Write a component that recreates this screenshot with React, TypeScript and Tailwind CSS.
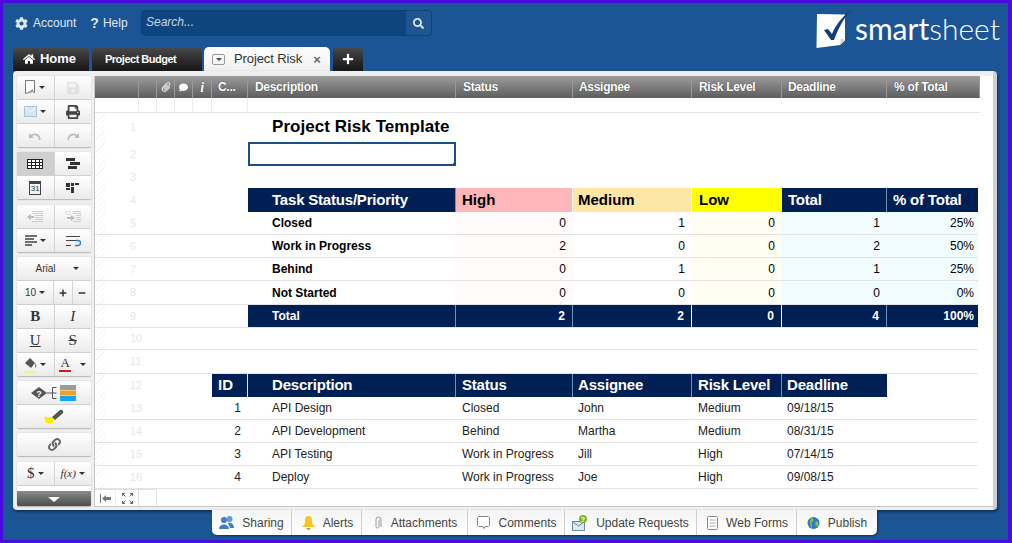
import React from 'react';
import { FaCog, FaHome, FaSearch, FaPrint, FaSave, FaPlus, FaMinus, FaLink, FaPaperclip, FaComment } from 'react-icons/fa';

const GRID = 'grid grid-cols-[117px_36px_208px_117px_119px_90px_105px_91px] w-[883px]';

type Cell = { t?: string; c?: string; box?: boolean };

const navy = 'bg-[#001f54] text-white font-bold';

const Row = ({ n, h = 23, line = true, cells }: { n: number; h?: number; line?: boolean; cells: Cell[] }) => (
  <div className={GRID + (line ? ' border-b border-[#e4e4e4]' : '')} style={{ height: h }}>
    <div className="flex items-center pl-[35px] text-[11px] text-[#e6e6e6] bg-[repeating-linear-gradient(135deg,#fff_0,#fff_3px,#f6f6f6_3px,#f6f6f6_4px)] bg-[length:10px_100%] bg-no-repeat">
      {n}
    </div>
    {cells.map((cell, i) => (
      <div key={i} className={'relative flex items-center whitespace-nowrap ' + (cell.c ?? '')}>
        {cell.t}
        {cell.box && <span className="absolute bottom-[-2px] right-[-2px] h-[3px] w-[3px] bg-[#1c4f86]" />}
      </div>
    ))}
  </div>
);

const blank = (k: number): Cell[] => Array.from({ length: k }, () => ({}));

const stat = (label: string, high: string, med: string, low: string, tot: string, pct: string): Cell[] => [
  {},
  { t: label, c: 'pl-[24px] text-[12px] font-bold text-black' },
  { t: high, c: 'justify-end pr-[7px] text-[12px] bg-[#fffbfb]' },
  { t: med, c: 'justify-end pr-[7px] text-[12px]' },
  { t: low, c: 'justify-end pr-[7px] text-[12px] bg-[#fffdf2]' },
  { t: tot, c: 'justify-end pr-[7px] text-[12px] bg-[#f0fcfd]' },
  { t: pct, c: 'justify-end pr-[4px] text-[12px] bg-[#f0fcfd]' },
];

const sep = ' border-r border-[#6f8fb8]';

const item = (id: string, d: string, s: string, a: string, r: string, dl: string): Cell[] => [
  { t: id, c: 'justify-end pr-[7px] text-[12px] text-[#222]' },
  { t: d, c: 'pl-[24px] text-[12px] text-[#222]' },
  { t: s, c: 'pl-[6px] text-[12px] text-[#222]' },
  { t: a, c: 'pl-[5px] text-[12px] text-[#222]' },
  { t: r, c: 'pl-[6px] text-[12px] text-[#222]' },
  { t: dl, c: 'pl-[5px] text-[12px] text-[#222]' },
  {},
];

const Tb = ({ children, w, on }: { children?: React.ReactNode; w?: string; on?: boolean }) => (
  <div
    className={
      'flex h-[23px] items-center justify-center gap-[3px] border-r border-[#d4d4d4] last:border-r-0 ' +
      (w ?? 'flex-1') +
      (on ? ' bg-[#cfcfcf]' : ' bg-gradient-to-b from-white to-[#ebebeb]')
    }
  >
    {children}
  </div>
);

const TbRow = ({ children }: { children: React.ReactNode }) => (
  <div className="flex border-b border-[#d0d0d0] last:border-b-0">{children}</div>
);

const Group = ({ children, c = '' }: { children: React.ReactNode; c?: string }) => (
  <div className={'w-[74px] overflow-hidden rounded-[2px] border-b border-[#bdbdbd] shadow-[0_0_1px_#999] ' + c}>
    {children}
  </div>
);

const Caret = () => <span className="h-0 w-0 border-x-[3px] border-t-[3px] border-x-transparent border-t-[#333]" />;

const ToolIcon = ({ children, w = 16, h = 16 }: { children: React.ReactNode; w?: number; h?: number }) => (
  <svg width={w} height={h} viewBox={`0 0 ${w} ${h}`}>
    {children}
  </svg>
);

const Toolbar = () => (
  <div className="flex h-[431px] w-[74px] flex-col gap-[4px] font-['Liberation_Sans',sans-serif]">
    <Group>
      <TbRow>
        <Tb>
          <ToolIcon w={11} h={15}>
            <path d="M.5.5h9v12l-2-1-7 2z" fill="#fff" stroke="#777" />
            <path d="M3 12l5-3v2z" fill="#999" />
          </ToolIcon>
          <Caret />
        </Tb>
        <Tb>
          <FaSave className="text-[14px] text-[#e2e2e2]" />
        </Tb>
      </TbRow>
      <TbRow>
        <Tb>
          <ToolIcon w={13} h={11}>
            <rect x=".5" y=".5" width="12" height="10" fill="#cfe8f3" stroke="#a9c4d2" />
            <path d="M1 1l5.500 5L12 1" fill="none" stroke="#fff" />
          </ToolIcon>
          <Caret />
        </Tb>
        <Tb>
          <FaPrint className="text-[14px] text-[#444]" />
        </Tb>
      </TbRow>
      <TbRow>
        <Tb>
          <ToolIcon w={14} h={10}>
            <path d="M12 9C11 3 6 2 3 5" fill="none" stroke="#bbb" strokeWidth="1.6" />
            <path d="M1 2v5h5z" fill="#bbb" />
          </ToolIcon>
        </Tb>
        <Tb>
          <ToolIcon w={14} h={10}>
            <path d="M2 9C3 3 8 2 11 5" fill="none" stroke="#bbb" strokeWidth="1.6" />
            <path d="M13 2v5H8z" fill="#bbb" />
          </ToolIcon>
        </Tb>
      </TbRow>
    </Group>
    <Group>
      <TbRow>
        <Tb on>
          <ToolIcon h={10}>
            <rect x=".5" y=".5" width="15" height="9" fill="#fff" stroke="#222" />
            <path d="M0 3.500h16M0 6.500h16M4.500 0v10M8.500 0v10M12.500 0v10" stroke="#222" />
          </ToolIcon>
        </Tb>
        <Tb>
          <ToolIcon h={11}>
            <path d="M1 0h9v3H1zM5 4h10v3H5zM3 8h9v3H3z" fill="#333" />
          </ToolIcon>
        </Tb>
      </TbRow>
      <TbRow>
        <Tb>
          <div className="flex h-[14px] w-[12px] items-end justify-center border border-t-[3px] border-[#444] text-[8px] leading-[10px] text-[#333]">
            31
          </div>
        </Tb>
        <Tb>
          <ToolIcon w={13} h={10}>
            <path d="M0 0h4v4H0zM5 0h3v3H5zM9 0h4v2H9zM0 5h4v2H0zM5 4h3v6H5z" fill="#333" />
          </ToolIcon>
        </Tb>
      </TbRow>
    </Group>
    <Group c="mt-px">
      <TbRow>
        <Tb>
          <ToolIcon h={12}>
            <path d="M5 .5h11M5 2.500h11M8 4.500h8M8 6.500h8M8 8.500h8M5 10.500h11" stroke="#ccc" />
            <path d="M0 6l4-3v2h3v2H4v2z" fill="#bbb" />
          </ToolIcon>
        </Tb>
        <Tb>
          <ToolIcon h={12}>
            <path d="M8 .5h8M8 2.500h8M11 4.500h5M11 6.500h5M11 8.500h5M8 10.500h8" stroke="#ccc" />
            <path d="M10 7L6 4v2H2v2h4v2z" fill="#bbb" />
            <path d="M1 .5h4v3H1z" fill="none" stroke="#ddd" />
          </ToolIcon>
        </Tb>
      </TbRow>
      <TbRow>
        <Tb>
          <ToolIcon w={12} h={11}>
            <path d="M0 1h12M0 4h9M0 7h12M0 10h7" stroke="#444" strokeWidth="1.4" />
          </ToolIcon>
          <Caret />
        </Tb>
        <Tb>
          <ToolIcon h={12}>
            <path d="M1 1.500h14M1 5.500h10M1 10.500h5" stroke="#444" />
            <path d="M11 5.500h2a2 2 0 0 1 0 5h-3" fill="none" stroke="#2a7fd0" strokeWidth="1.4" />
          </ToolIcon>
        </Tb>
      </TbRow>
    </Group>
    <Group>
      <TbRow>
        <Tb>
          <span className="pl-[6px] pr-[14px] text-[10px] text-[#333]">Arial</span>
          <Caret />
        </Tb>
      </TbRow>
      <TbRow>
        <Tb w="w-[37px]">
          <span className="text-[10px] text-[#333]">10</span>
          <Caret />
        </Tb>
        <Tb>
          <FaPlus className="text-[8px] text-[#333]" />
        </Tb>
        <Tb>
          <FaMinus className="text-[8px] text-[#333]" />
        </Tb>
      </TbRow>
      <TbRow>
        <Tb>
          <span className="font-['Liberation_Serif',serif] text-[15px] font-bold text-[#333]">B</span>
        </Tb>
        <Tb>
          <span className="font-['Liberation_Serif',serif] text-[15px] italic text-[#333]">I</span>
        </Tb>
      </TbRow>
      <TbRow>
        <Tb>
          <span className="font-['Liberation_Serif',serif] text-[15px] text-[#333] underline">U</span>
        </Tb>
        <Tb>
          <span className="font-['Liberation_Serif',serif] text-[15px] text-[#333] line-through">S</span>
        </Tb>
      </TbRow>
      <TbRow>
        <Tb>
          <ToolIcon w={13} h={16}>
            <path d="M1 6l5-5 5 5-4 5z" fill="#555" />
            <path d="M11 6c2 2 2 4 0 5z" fill="#888" />
            <path d="M0 15h11" stroke="#f4f060" strokeWidth="1.4" />
          </ToolIcon>
          <Caret />
        </Tb>
        <Tb>
          <div className="flex flex-col items-center pr-[6px]">
            <span className="font-['Liberation_Serif',serif] text-[13px] leading-[12px] text-[#333]">A</span>
            <span className="mt-px h-[2px] w-[12px] bg-[#d01c1c]" />
          </div>
          <Caret />
        </Tb>
      </TbRow>
    </Group>
    <Group>
      <TbRow>
        <Tb>
          <svg width="46" height="16" viewBox="0 0 46 16">
            <path d="M0 8l8-6 8 6-8 6z" fill="#555" />
            <text x="8" y="11.500" textAnchor="middle" fontSize="9" fontWeight="bold" fill="#fff" fontFamily="Liberation Sans">?</text>
            <path d="M16 8h5M21.500 2.500v11M21.500 2.500h4M21.500 8h4M21.500 13.500h4" stroke="#555" fill="none" />
            <rect x="29" y="0" width="16" height="5" fill="#9c9c9c" />
            <rect x="29" y="5.500" width="16" height="5" fill="#f2a01e" />
            <rect x="29" y="11" width="16" height="5" fill="#12a5f0" />
          </svg>
        </Tb>
      </TbRow>
      <TbRow>
        <Tb>
          <ToolIcon w={20} h={15}>
            <path d="M0 8h9v6H2z" fill="#f7ef00" />
            <path d="M8 8l8-7q2-1 3 1t-1 3l-7 6z" fill="#555" />
          </ToolIcon>
        </Tb>
      </TbRow>
    </Group>
    <Group>
      <TbRow>
        <Tb>
          <FaLink className="text-[13px] text-[#666]" />
        </Tb>
      </TbRow>
    </Group>
    <Group c="mt-px flex-1">
      <TbRow>
        <Tb>
          <span className="font-['Liberation_Serif',serif] text-[15px] text-[#333]">$</span>
          <Caret />
        </Tb>
        <Tb>
          <span className="font-['Liberation_Serif',serif] text-[11px] italic text-[#333]">f(x)</span>
          <Caret />
        </Tb>
      </TbRow>
      <div className="h-[5px] bg-white" />
      <div className="flex h-[16px] items-center justify-center bg-gradient-to-b from-[#8a8a8a] to-[#4a4a4a]">
        <span className="h-0 w-0 border-x-[6px] border-t-[5px] border-x-transparent border-t-white" />
      </div>
    </Group>
  </div>
);

const Head = ({ children, c = '' }: { children?: React.ReactNode; c?: string }) => (
  <div className={'flex items-center overflow-hidden whitespace-nowrap border-r border-[#999] text-[12px] font-bold tracking-[-0.3px] text-white [text-shadow:0_0_1px_#333] ' + c}>
    {children}
  </div>
);

const Sheet = () => (
  <div className="flex min-w-0 flex-1 flex-col overflow-hidden border-b border-l border-[#c8c8c8] bg-white font-['Liberation_Sans',sans-serif]">
    <div className="flex-1 overflow-hidden">
      <div className="flex h-[22px] w-[885px] bg-gradient-to-b from-[#9c9c9c] to-[#5e5e5e]">
        <Head c="w-[44px]" />
        <Head c="w-[18px]" />
        <Head c="w-[18px] justify-center">
          <FaPaperclip className="text-[10px] text-[#ddd]" />
        </Head>
        <Head c="w-[18px] justify-center">
          <FaComment className="text-[9px] text-white" />
        </Head>
        <Head c="w-[19px] justify-center font-['Liberation_Serif',serif] text-[14px] italic">i</Head>
        <Head c="w-[36px] pl-[6px]">C...</Head>
        <Head c="w-[208px] pl-[7px]">Description</Head>
        <Head c="w-[117px] pl-[7px]">Status</Head>
        <Head c="w-[119px] pl-[6px]">Assignee</Head>
        <Head c="w-[90px] pl-[7px]">Risk Level</Head>
        <Head c="w-[105px] pl-[6px]">Deadline</Head>
        <Head c="w-[93px] pl-[7px]">% of Total</Head>
      </div>
      <div className="flex h-[15px] w-[885px] border-b border-[#e4e4e4]">
        {[44, 18, 18, 18, 19, 36].map((w, i) => (
          <div key={i} className="border-r border-[#eeeeee]" style={{ width: w }} />
        ))}
      </div>
      <Row n={1} h={28} line={false} cells={[{}, { t: 'Project Risk Template', c: 'pl-[24px] text-[17px] font-bold tracking-[0.05px] text-black' }, ...blank(5)]} />
      <div className="mt-px">
        <Row n={2} h={24} line={false} cells={[{}, { c: 'border-2 border-[#1c4f86]', box: true }, ...blank(5)]} />
      </div>
      <Row n={3} h={22} line={false} cells={blank(7)} />
      <Row
        n={4}
        h={24}
        line={false}
        cells={[
          {},
          { t: 'Task Status/Priority', c: navy + sep + ' pl-[24px] text-[15px] tracking-[-0.2px]' },
          { t: 'High', c: 'bg-[#ffb6b9] border-r border-white pl-[6px] text-[15px] font-bold text-black' },
          { t: 'Medium', c: 'bg-[#fde6a6] border-r border-white pl-[5px] text-[15px] font-bold text-black' },
          { t: 'Low', c: 'bg-[#ffff00] pl-[7px] text-[15px] font-bold text-black' },
          { t: 'Total', c: navy + sep + ' pl-[6px] text-[15px] tracking-[-0.2px]' },
          { t: '% of Total', c: navy + ' pl-[6px] text-[15px] tracking-[-0.2px]' },
        ]}
      />
      <Row n={5} cells={stat('Closed', '0', '1', '0', '1', '25%')} />
      <Row n={6} cells={stat('Work in Progress', '2', '0', '0', '2', '50%')} />
      <Row n={7} cells={stat('Behind', '0', '1', '0', '1', '25%')} />
      <Row n={8} h={24} cells={stat('Not Started', '0', '0', '0', '0', '0%')} />
      <Row
        n={9}
        cells={[
          {},
          { t: 'Total', c: navy + sep + ' pl-[24px] text-[12px]' },
          { t: '2', c: navy + sep + ' justify-end pr-[7px] text-[12px]' },
          { t: '2', c: navy + ' border-r border-white justify-end pr-[7px] text-[12px]' },
          { t: '0', c: navy + ' border-r border-white justify-end pr-[7px] text-[12px]' },
          { t: '4', c: navy + sep + ' justify-end pr-[7px] text-[12px]' },
          { t: '100%', c: navy + ' justify-end pr-[4px] text-[12px]' },
        ]}
      />
      <Row n={10} h={22} cells={blank(7)} />
      <Row n={11} h={24} cells={blank(7)} />
      <Row
        n={12}
        h={23}
        line={false}
        cells={[
          { t: 'ID', c: navy + ' border-r border-[#dfe8f2] pl-[6px] text-[15px]' },
          { t: 'Description', c: navy + sep + ' pl-[24px] text-[15px] tracking-[-0.2px]' },
          { t: 'Status', c: navy + sep + ' pl-[6px] text-[15px] tracking-[-0.2px]' },
          { t: 'Assignee', c: navy + sep + ' pl-[5px] text-[15px] tracking-[-0.2px]' },
          { t: 'Risk Level', c: navy + sep + ' pl-[6px] text-[15px] tracking-[-0.2px]' },
          { t: 'Deadline', c: navy + ' pl-[5px] text-[15px] tracking-[-0.2px]' },
          {},
        ]}
      />
      <Row n={13} cells={item('1', 'API Design', 'Closed', 'John', 'Medium', '09/18/15')} />
      <Row n={14} cells={item('2', 'API Development', 'Behind', 'Martha', 'Medium', '08/31/15')} />
      <Row n={15} cells={item('3', 'API Testing', 'Work in Progress', 'Jill', 'High', '07/14/15')} />
      <Row n={16} cells={item('4', 'Deploy', 'Work in Progress', 'Joe', 'High', '09/08/15')} />
    </div>
    <div className="flex h-[17px] w-[62px] border-t border-r border-[#e0e0e0]">
      <div className="flex w-[21px] items-center justify-center border-r border-[#eee]">
        <svg width="11" height="9" viewBox="0 0 11 9">
          <path d="M.5 0v9" stroke="#777" />
          <path d="M2 4.500L6 1v2h5v3H6v2z" fill="#777" />
        </svg>
      </div>
      <div className="flex w-[23px] items-center justify-center border-r border-[#e0e0e0]">
        <svg width="11" height="11" viewBox="0 0 11 11">
          <path d="M0 0h3.500L0 3.500zM11 0H7.500L11 3.500zM0 11h3.500L0 7.500zM11 11H7.500L11 7.500z" fill="#666" />
          <path d="M1 1l2.500 2.500M10 1L7.500 3.500M1 10l2.500-2.500M10 10L7.500 7.500" stroke="#666" />
        </svg>
      </div>
    </div>
  </div>
);

const BottomTab = ({ icon, label, w }: { icon: React.ReactNode; label: string; w: string }) => (
  <div className={'flex h-full items-center justify-center gap-[8px] border-r border-[#cfcfcf] last:border-r-0 ' + w}>
    {icon}
    <span className="text-[12px] text-[#444]">{label}</span>
  </div>
);

export default function App() {
  return (
    <div className="flex h-[543px] w-[1012px] flex-col overflow-hidden border-[3px] border-r-[4px] border-[#4a0be0] bg-[#1c5596] font-['Liberation_Sans',sans-serif]">
      {/* top bar */}
      <div className="flex h-[44px] items-center pb-[4px]">
        <div className="ml-[12px] flex w-[126px] items-center text-[12px] text-[#dfe9f3]">
          <FaCog className="mr-[5px] text-[13px]" />
          <span>Account</span>
          <span className="ml-[14px] mr-[4px] text-[14px] font-bold leading-none">?</span>
          <span>Help</span>
        </div>
        <div className="flex h-[26px] w-[291px] overflow-hidden rounded-[4px] border border-[#134072] bg-[#0f457f]">
          <div className="flex-1 pl-[4px] text-[12px] italic leading-[22px] text-[#c9d6e6]">Search...</div>
          <div className="flex w-[25px] items-center justify-center bg-[#1f568f]">
            <FaSearch className="text-[11px] text-[#dfe9f3]" />
          </div>
        </div>
        <div className="ml-auto mr-[8px] flex items-start gap-[3px] self-start pt-[6px]">
          <svg width="36" height="39" viewBox="0 0 36 39">
            <path d="M1 5l28 .5v26L24 36 .5 39z" fill="#fff" />
            <path d="M24 35.500l1-6 4 1.500z" fill="#d8d2c0" />
            <path d="M8 21l4-1 4 5C20 15 28 6 36 0 28 8 22 20 18 31h-3z" fill="#123e76" />
          </svg>
          <div className="mt-px font-['Lato',sans-serif] text-[30px] leading-[36px] text-white">
            <span className="font-normal">smart</span>
            <span className="font-light">sheet</span>
          </div>
        </div>
      </div>

      {/* tabs */}
      <div className="flex h-[24px] items-end pl-[10px] text-white">
        <div className="flex h-full w-[76px] items-center justify-center gap-[5px] rounded-t-[5px] bg-gradient-to-b from-[#4a4a4a] to-[#161616] pr-[3px] text-[13px] font-bold">
          <FaHome className="text-[12px]" />
          Home
        </div>
        <div className="ml-[3px] flex h-full w-[110px] items-center rounded-t-[5px] bg-gradient-to-b from-[#4a4a4a] to-[#161616] pl-[13px] text-[11px] font-bold tracking-[-0.5px]">
          Project Budget
        </div>
        <div className="ml-[2px] flex h-full w-[126px] items-center rounded-t-[5px] bg-gradient-to-b from-white to-[#efefef] pl-[8px] text-[13px] tracking-[-0.1px] text-[#333]">
          <span className="mr-[9px] flex h-[11px] w-[13px] items-center justify-center rounded-[2px] border border-[#999]">
            <span className="h-0 w-0 border-x-[3px] border-t-[3px] border-x-transparent border-t-[#444]" />
          </span>
          Project Risk
          <span className="ml-[11px] text-[13px] font-bold leading-none text-[#666]">×</span>
        </div>
        <div className="ml-[3px] flex h-full w-[30px] items-center justify-center rounded-t-[5px] bg-gradient-to-b from-[#4a4a4a] to-[#161616]">
          <FaPlus className="text-[12px]" />
        </div>
      </div>

      {/* panel */}
      <div className="ml-[10px] flex h-[439px] w-[984px] gap-[3px] rounded-[4px] border-r-[4px] border-[#d0d0d0] bg-[#efefef] pb-[3px] pl-[4px] pt-[5px] shadow-[1px_2px_3px_#10305a]">
        <Toolbar />
        <Sheet />
      </div>

      {/* bottom tabs */}
      <div className="ml-[209px] flex h-[25px] w-[665px] rounded-b-[5px] bg-gradient-to-b from-[#f4f4f4] to-white shadow-[1px_1px_2px_#10305a]">
        <BottomTab
          w="w-[80px]"
          label="Sharing"
          icon={
            <svg width="15" height="13" viewBox="0 0 15 13">
              <circle cx="5" cy="4" r="3" fill="#3f7fc8" />
              <circle cx="10.500" cy="3" r="3" fill="#5f9bdc" />
              <path d="M0 13c0-6 10-6 10 0zM9 7c3-1 6 1 6 5h-4z" fill="#3f7fc8" />
            </svg>
          }
        />
        <BottomTab
          w="w-[70px] pl-[2px]"
          label="Alerts"
          icon={
            <svg width="13" height="14" viewBox="0 0 13 14">
              <path d="M6.500 0C3 0 3 3 3 6c0 3-2 4-3 5h13c-1-1-3-2-3-5 0-3 0-6-3.500-6z" fill="#f7c520" />
              <path d="M4.500 12h4a2 2 0 0 1-4 0z" fill="#d99d10" />
            </svg>
          }
        />
        <BottomTab
          w="w-[106px] pl-[3px]"
          label="Attachments"
          icon={
            <svg width="8" height="14" viewBox="0 0 8 14">
              <path d="M5.500 3v7a1.500 1.500 0 0 1-3 0V3a2.500 2.500 0 0 1 5 0v7.500" transform="translate(-1.500 .5)" fill="none" stroke="#999" />
            </svg>
          }
        />
        <BottomTab
          w="w-[97px] pl-[2px]"
          label="Comments"
          icon={
            <svg width="13" height="13" viewBox="0 0 13 13">
              <path d="M1.500.5h10l1 1v8l-1 1H8l-1 2-1-2H1.500l-1-1v-8z" fill="#fff" stroke="#888" />
            </svg>
          }
        />
        <BottomTab
          w="w-[132px]"
          label="Update Requests"
          icon={
            <svg width="16" height="16" viewBox="0 0 16 16">
              <rect x=".5" y="6.500" width="12" height="9" fill="#d5ecf5" stroke="#789" />
              <path d="M1 7l5.500 4L12 7" fill="none" stroke="#789" />
              <circle cx="11" cy="4" r="4" fill="#7fb72a" />
              <text x="11" y="7" textAnchor="middle" fontSize="7" fontWeight="bold" fill="#fff" fontFamily="Liberation Sans">?</text>
            </svg>
          }
        />
        <BottomTab
          w="w-[100px] pl-[2px]"
          label="Web Forms"
          icon={
            <svg width="11" height="14" viewBox="0 0 11 14">
              <rect x=".5" y=".5" width="10" height="13" rx="1" fill="#fff" stroke="#888" />
              <path d="M2.500 4h6M2.500 7h6M2.500 10h6" stroke="#aaa" />
            </svg>
          }
        />
        <BottomTab
          w="w-[80px]"
          label="Publish"
          icon={
            <svg width="13" height="14" viewBox="0 0 13 14">
              <circle cx="6.500" cy="7" r="6" fill="#2a78c8" />
              <path d="M4 2c3 0 3 3 1 4s1 3 0 6C3 10 2 6 4 2zM9 5c2 0 3 2 2 4l-2 2c-1-2-1-4 0-6z" fill="#8fbf3c" />
            </svg>
          }
        />
      </div>
    </div>
  );
}
